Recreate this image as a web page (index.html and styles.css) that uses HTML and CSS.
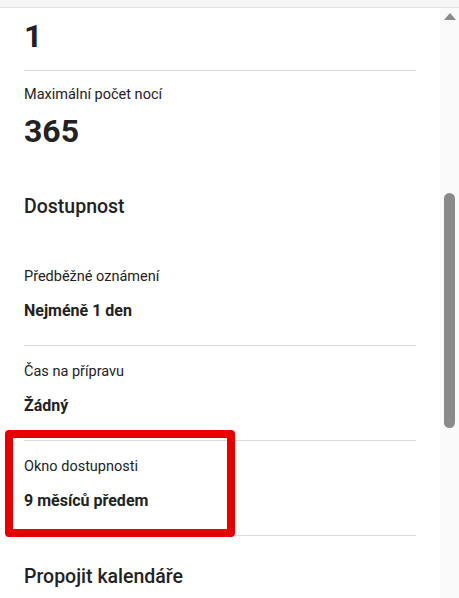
FILE: index.html
```html
<!DOCTYPE html>
<html lang="cs">
<head>
  <meta charset="UTF-8">
  <meta name="viewport" content="width=device-width, initial-scale=1.0">
  <title>Dostupnost</title>
  <link rel="stylesheet" href="styles.css">
</head>
<body>
  <div class="top-bar"></div>
  <div class="frame">
    <div class="viewport">
      <div class="content">
        <div class="setting big">
          <div class="label">Minimální počet nocí</div>
          <div class="value">1</div>
        </div>
        <div class="setting big last">
          <div class="label">Maximální počet nocí</div>
          <div class="value">365</div>
        </div>

        <h2 class="section-title">Dostupnost</h2>
        <div class="setting">
          <div class="label">Předběžné oznámení</div>
          <div class="value">Nejméně 1 den</div>
        </div>
        <div class="setting">
          <div class="label">Čas na přípravu</div>
          <div class="value">Žádný</div>
        </div>
        <div class="setting highlighted">
          <div class="label">Okno dostupnosti</div>
          <div class="value">9 měsíců předem</div>
          <div class="highlight-box"></div>
        </div>

        <h2 class="section-title next">Propojit kalendáře</h2>
      </div>
    </div>
    <div class="scrollbar">
      <div class="scroll-arrow"></div>
      <div class="scroll-thumb"></div>
    </div>
  </div>
</body>
</html>
```

FILE: styles.css
```css
body {
  margin: 0;
  font-family: Roboto, "Liberation Sans", sans-serif;
  color: #222;
  background: #fff;
  overflow: hidden;
}

.top-bar {
  height: 7px;
  background-color: #f5f5f5;
  border-bottom: 1px solid #e2e2e2;
}

.frame {
  display: flex;
  height: 590px;
}

.viewport {
  flex: 1;
  overflow: hidden;
}

.content {
  margin-top: -32px;
  padding: 0 24px;
}

/* one row of settings */
.setting {
  position: relative;
  padding: 16px 0 24px;
  border-bottom: 1px solid #dddddd;
}

.label {
  font-size: 14.5px;
  line-height: 20px;
}

.value {
  margin-top: 14px;
  font-size: 16px;
  font-weight: 700;
  line-height: 20px;
}

.setting.big {
  padding: 14px 0 16px;
}

.setting.big .value {
  margin-top: 8px;
  font-size: 32px;
  line-height: 36px;
}

.setting.last {
  border-bottom: none;
}

.section-title {
  margin: 30px 0 32px;
  font-size: 19.5px;
  font-weight: 500;
  line-height: 24px;
}

.section-title.next {
  margin-top: 29px;
}

.highlight-box {
  position: absolute;
  left: -19px;
  top: -11px;
  width: 214px;
  height: 91px;
  border: 8px solid #e60000;
  border-radius: 4px;
}

.scrollbar {
  width: 19px;
  background-color: #fafafa;
  display: flex;
  flex-direction: column;
  align-items: center;
}

.scroll-arrow {
  margin-top: 5px;
  width: 0;
  height: 0;
  border-left: 6px solid transparent;
  border-right: 6px solid transparent;
  border-bottom: 7px solid #8a8a8a;
}

.scroll-thumb {
  margin-top: 173px;
  width: 11px;
  height: 235px;
  background-color: #8a8a8a;
  border-radius: 6px;
}
```
